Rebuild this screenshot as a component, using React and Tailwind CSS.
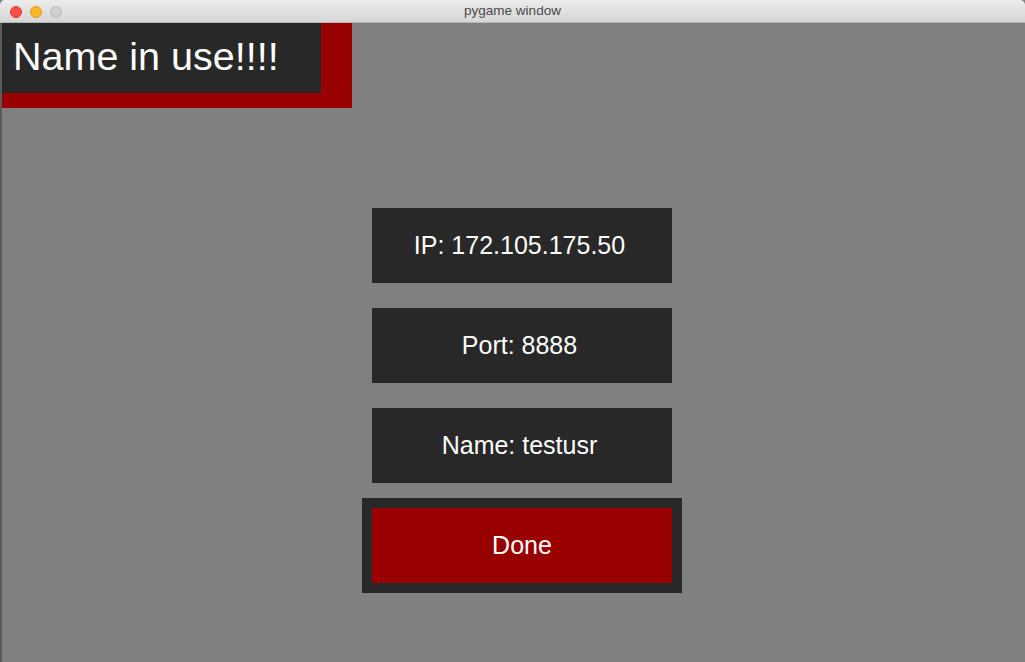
export default function App() {
  const box = "w-[300px] h-[75px] bg-[#282828] flex items-center justify-center pr-[5px] text-white text-[25px]";
  return (
    <div className="w-[1025px] h-[662px] flex flex-col overflow-hidden bg-[#808080]" style={{ fontFamily: '"Liberation Sans", Arial, sans-serif' }}>
      <div className="relative h-[23px] shrink-0 flex items-center justify-center bg-gradient-to-b from-[#ececec] to-[#d6d6d6] border-b border-[#b4b4b4] rounded-tr-[5px] rounded-tl-[5px]">
        <div className="absolute left-[10px] top-[6px] flex gap-[8px]">
          <div className="w-[12px] h-[12px] rounded-full bg-[#fd4e4a] border border-[#df3b36]" />
          <div className="w-[12px] h-[12px] rounded-full bg-[#fdb72a] border border-[#de9c1e]" />
          <div className="w-[12px] h-[12px] rounded-full bg-[#cfcfcf] border border-[#bdbdbd]" />
        </div>
        <span className="text-[13.5px] text-[#4a4a4a] pt-[1px]">pygame window</span>
      </div>
      <div className="flex-1 flex flex-col border-l-2 border-[#5a5a5a]">
        <div className="w-[350px] h-[85px] bg-[#990000]">
          <div className="w-[319px] h-[70px] bg-[#282828] pl-[11px] pt-[13px]">
            <span className="block text-white text-[39.5px] leading-[40px]">Name in use!!!!</span>
          </div>
        </div>
        <div className="ml-[370px] mt-[100px] flex flex-col gap-[25px]">
          <div className={box}>IP: 172.105.175.50</div>
          <div className={box}>Port: 8888</div>
          <div className={box}>Name: testusr</div>
        </div>
        <div className="ml-[360px] mt-[15px] w-[320px] h-[95px] bg-[#282828] p-[10px]">
          <div className="w-full h-full bg-[#990000] flex items-center justify-center text-white text-[25px]">Done</div>
        </div>
      </div>
    </div>
  );
}
